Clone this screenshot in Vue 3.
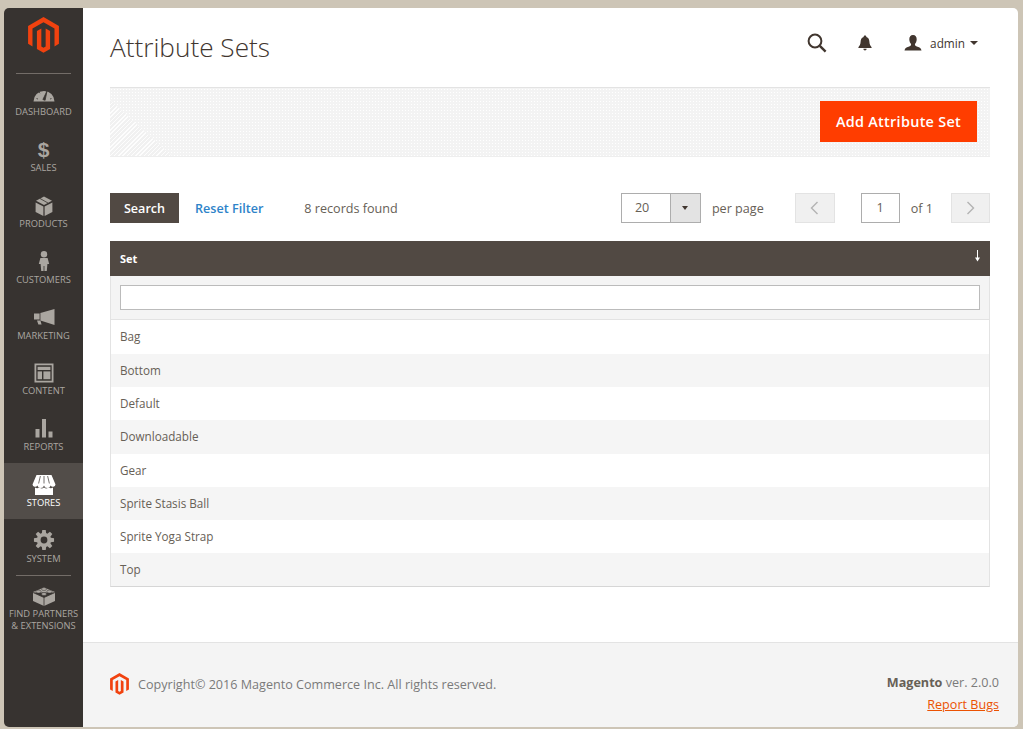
<script setup>
// gear outline for the System menu icon
const gearPath = () => {
  const cx = 12, cy = 10, teeth = 8
  let d = ''
  for (let i = 0; i < teeth; i++) {
    const a = (i / teeth) * Math.PI * 2
    const pts = [[-0.3, 7.2], [-0.17, 10.2], [0.17, 10.2], [0.3, 7.2]]
    pts.forEach(([off, r], j) => {
      const x = cx + r * Math.cos(a + off)
      const y = cy + r * Math.sin(a + off)
      d += (i === 0 && j === 0 ? 'M' : 'L') + x.toFixed(2) + ' ' + y.toFixed(2)
    })
  }
  return d + 'Z M12 6.6A3.4 3.4 0 1 0 12 13.4A3.4 3.4 0 1 0 12 6.6Z'
}

const menu = [
  { label: 'Dashboard', paths: ['M1.5 17.5A10.5 10.5 0 0 1 22.5 17.5Z'], cuts: ['M10.9 15.5L15 7L13.1 16.3Z', 'M4.5 14.5L6 15', 'M7 8L8 9.2', 'M12 5.5V7', 'M19.5 14.5L18 15'] },
  { label: 'Sales', text: '$' },
  { label: 'Products', paths: ['M3.6 6.4L11.4 10.4V20L3.6 16Z', 'M20.4 6.4L12.6 10.4V20L20.4 16Z', 'M12 0.5L20 4.8L12 9L4 4.8Z'], cuts: ['M8 2.5L16 7'] },
  { label: 'Customers', paths: ['M12 0A3.2 3.2 0 1 0 12 6.4A3.2 3.2 0 1 0 12 0Z', 'M8.4 7H15.6L17.2 13H15.4L14.8 20H12.4V15H11.6V20H9.2L8.6 13H6.8Z'] },
  { label: 'Marketing', paths: ['M2 6.5H7.6V12.5H2Z', 'M8.4 6L22.5 2V18L8.4 13.5Z', 'M5 13.4H8.4L9.6 17.5H6.4Z'] },
  { label: 'Content', paths: ['M2.5 0.5H21.5V19.5H2.5ZM4.3 2.3V17.7H19.7V2.3Z', 'M5.6 3.8H18.4V7H5.6Z', 'M5.6 8.4H10V16.2H5.6Z', 'M11.4 8.4H18.4V16.2H11.4Z'] },
  { label: 'Reports', paths: ['M3.5 10H7.5V18.5H3.5Z', 'M10 0H14V18.5H10Z', 'M16.5 12.5H20.5V18.5H16.5Z'] },
  {
    label: 'Stores',
    active: true,
    paths: ['M4.5 0H19.5L23.5 9.5A2.6 2.6 0 0 1 18.6 10.4A3.4 3.4 0 0 1 12 10.4A3.4 3.4 0 0 1 5.4 10.4A2.6 2.6 0 0 1 0.5 9.5Z', 'M3 12.4C4.2 13.4 6 13.4 7.4 12.4C9.4 13.8 11 13.6 12 12.6C13 13.6 14.6 13.8 16.6 12.4C18 13.4 19.8 13.4 21 12.4V20H3Z'],
    cuts: ['M8.4 1L6.6 8.5', 'M12 1V8.5', 'M15.6 1L17.4 8.5']
  },
  { label: 'System', paths: [gearPath()] },
]

const rows = ['Bag', 'Bottom', 'Default', 'Downloadable', 'Gear', 'Sprite Stasis Ball', 'Sprite Yoga Strap', 'Top']
const logo = 'M15 0L30 8.7V26.1L25.7 28.6V11.2L15 5L4.3 11.2V28.6L0 26.1V8.7ZM8.6 13.7L12.9 11.2V28.6L15 29.9L17.1 28.6V11.2L21.4 13.7V31.1L15 34.8L8.6 31.1Z'
</script>

<template>
  <div class="window">
    <nav class="sidebar">
      <div class="logo">
        <svg width="31" height="36" viewBox="0 0 30 35"><path :d="logo" fill="#f1420f" /></svg>
      </div>
      <div class="menu">
        <div v-for="item in menu" :key="item.label" class="menu-item" :class="{ active: item.active }">
          <span v-if="item.text" class="icon-text">{{ item.text }}</span>
          <svg v-else class="menu-icon" width="24" height="20" viewBox="0 0 24 20">
            <path v-for="d in item.paths" :key="d" :d="d" fill-rule="evenodd" class="icon-fill" />
            <path v-for="d in item.cuts" :key="d" :d="d" class="icon-cut" />
          </svg>
          <span class="menu-label">{{ item.label }}</span>
        </div>
      </div>
      <div class="menu-item partners">
        <svg class="menu-icon" width="24" height="20" viewBox="0 0 24 20">
          <path class="icon-fill" d="M1 6L12 1.5L23 6V15L12 20L1 15Z" />
          <path class="icon-cut" d="M1 6.5L12 11.5L23 6.5M12 11.5V20" fill="none" />
          <ellipse class="stud" cx="12" cy="3" rx="2.6" ry="1.5" />
          <ellipse class="stud" cx="6.5" cy="5.6" rx="2.6" ry="1.5" />
          <ellipse class="stud" cx="17.5" cy="5.6" rx="2.6" ry="1.5" />
          <ellipse class="stud" cx="12" cy="8" rx="2.6" ry="1.5" />
        </svg>
        <span class="menu-label">Find Partners<br />&amp; Extensions</span>
      </div>
    </nav>

    <div class="main">
      <div class="content">
        <header class="page-header">
          <h1>Attribute Sets</h1>
          <div class="header-tools">
            <svg class="tool-search" width="20" height="20" viewBox="0 0 20 20">
              <circle cx="8" cy="8" r="6.4" fill="none" stroke="#41362f" stroke-width="2" />
              <path d="M12.8 12.8L18.6 18.6" stroke="#41362f" stroke-width="2.4" />
            </svg>
            <svg class="tool-bell" width="14" height="16" viewBox="0 0 14 16">
              <path fill="#41362f" d="M7 0.5C8 0.5 8.4 1.2 8.4 1.9C10.6 2.6 11.3 4.4 11.4 6.8C11.5 9.4 12.4 10.8 13.6 12.2V13H0.4V12.2C1.6 10.8 2.5 9.4 2.6 6.8C2.7 4.4 3.4 2.6 5.6 1.9C5.6 1.2 6 0.5 7 0.5ZM5.4 13.8H8.6C8.6 14.9 7.9 15.5 7 15.5C6.1 15.5 5.4 14.9 5.4 13.8Z" />
            </svg>
            <div class="user">
              <svg width="18" height="16" viewBox="0 0 17 16">
                <path fill="#41362f" d="M8.5 0C11 0 12.2 1.8 12.2 4.2C12.2 6.4 11.2 8.2 10.4 9C10.4 10.6 11 11 13 11.8C15.2 12.6 16.6 13.2 17 15.5H0C0.4 13.2 1.8 12.6 4 11.8C6 11 6.6 10.6 6.6 9C5.8 8.2 4.8 6.4 4.8 4.2C4.8 1.8 6 0 8.5 0Z" />
              </svg>
              <span class="user-name">admin</span>
              <span class="caret user-caret"></span>
            </div>
          </div>
        </header>

        <div class="action-bar">
          <button class="btn-primary">Add Attribute Set</button>
        </div>

        <div class="grid-controls">
          <div class="controls-left">
            <button class="btn-search">Search</button>
            <a class="reset-link">Reset Filter</a>
            <span class="records">8 records found</span>
          </div>
          <div class="controls-right">
            <div class="per-page">
              <span class="per-value">20</span>
              <span class="per-arrow"><span class="caret dark"></span></span>
            </div>
            <span class="per-label">per page</span>
            <button class="page-btn prev">
              <svg width="9" height="14" viewBox="0 0 9 14"><path d="M7.5 1L1.5 7L7.5 13" fill="none" stroke="#b3b3b3" stroke-width="1.4" /></svg>
            </button>
            <span class="page-input">1</span>
            <span class="page-of">of 1</span>
            <button class="page-btn next">
              <svg width="9" height="14" viewBox="0 0 9 14"><path d="M1.5 1L7.5 7L1.5 13" fill="none" stroke="#b3b3b3" stroke-width="1.4" /></svg>
            </button>
          </div>
        </div>

        <div class="grid">
          <div class="grid-head">
            <span>Set</span>
            <svg class="sort" width="7" height="12" viewBox="0 0 7 12">
              <path d="M3.5 0V8" stroke="#fff" stroke-width="1" />
              <path d="M1 7.5H6L3.5 11.5Z" fill="#fff" />
            </svg>
          </div>
          <div class="grid-filter">
            <input type="text" class="filter-input" />
          </div>
          <div v-for="(row, index) in rows" :key="row" class="grid-row" :class="{ even: index % 2 === 1 }">{{ row }}</div>
        </div>
      </div>

      <footer class="footer">
        <div class="copyright">
          <svg width="19" height="22" viewBox="0 0 30 35"><path :d="logo" fill="#f1420f" /></svg>
          <span>Copyright© 2016 Magento Commerce Inc. All rights reserved.</span>
        </div>
        <div class="version">
          <div><strong>Magento</strong> ver. 2.0.0</div>
          <a class="report">Report Bugs</a>
        </div>
      </footer>
    </div>
  </div>
</template>

<style>
html, body {
  margin: 0;
  background: #cdc5b6;
}
</style>

<style scoped>
.window {
  box-sizing: border-box;
  width: 1023px;
  height: 729px;
  padding: 8px 5px 2px 4px;
  display: flex;
  font-family: "Open Sans", sans-serif;
  color: #676056;
}
.sidebar {
  width: 79px;
  flex: none;
  background: #373330;
  border-radius: 5px 0 0 5px;
}
.logo {
  height: 64.6px;
  display: flex;
  justify-content: center;
  padding-top: 9px;
  box-sizing: border-box;
}
.logo::after {
  content: "";
  position: absolute;
  left: 16px;
  top: 73px;
  width: 55px;
  border-top: 1px solid #736d68;
}
.menu-item {
  height: 55.8px;
  box-sizing: border-box;
  padding-top: 11.5px;
  display: flex;
  flex-direction: column;
  align-items: center;
}
.menu-item.active {
  background: #524d49;
}
.menu-icon {
  flex: none;
  overflow: visible;
}
.icon-text {
  height: 20px;
  font-size: 21px;
  line-height: 20px;
  font-weight: 700;
  color: #aaa6a0;
  font-family: "Liberation Sans", sans-serif;
}
.icon-fill {
  fill: #aaa6a0;
}
.icon-cut {
  fill: #373330;
  stroke: #373330;
  stroke-width: 0.8;
}
.stud {
  fill: #aaa6a0;
  stroke: #373330;
  stroke-width: 0.5;
}
.active .icon-fill {
  fill: #fff;
}
.active .icon-cut {
  fill: #524d49;
  stroke: #524d49;
}
.menu-label {
  margin-top: 2.3px;
  font-size: 9.35px;
  line-height: 12px;
  text-transform: uppercase;
  text-align: center;
  color: #aaa6a0;
  white-space: nowrap;
}
.active .menu-label {
  color: #fff;
}
.partners {
  height: auto;
  margin: 0 12px;
  border-top: 1px solid #736d68;
  padding-top: 10px;
}
.partners .menu-label {
  margin: 2px -12px 0;
}
.main {
  flex: 1;
  min-width: 0;
  background: #fff;
  border-radius: 0 5px 5px 0;
  display: flex;
  flex-direction: column;
  overflow: hidden;
}
.content {
  flex: 1;
  padding: 0 28px 0 27px;
}
.page-header {
  height: 79px;
  display: flex;
  align-items: center;
  justify-content: space-between;
}
h1 {
  margin: 0 0 2px;
  font-size: 26.2px;
  font-weight: 300;
  color: #41362f;
}
.header-tools {
  display: flex;
  align-items: center;
  margin-right: 12px;
  margin-bottom: 9px;
}
.tool-search {
  margin-right: 31px;
}
.tool-bell {
  margin-right: 32px;
}
.user {
  display: flex;
  align-items: center;
  gap: 8px;
}
.user-name {
  font-size: 11.8px;
  color: #41362f;
}
.caret {
  width: 0;
  height: 0;
  border-left: 4px solid transparent;
  border-right: 4px solid transparent;
  border-top: 4px solid #41362f;
}
.user-caret {
  margin-left: -3px;
}
.action-bar {
  position: relative;
  height: 70px;
  box-sizing: border-box;
  border-top: 1px solid #e3e3e3;
  border-bottom: 1px solid #eee;
  padding: 13px 13px 0 0;
  display: flex;
  justify-content: flex-end;
  background-color: #f3f3f3;
  background-image: radial-gradient(#fff 0.7px, transparent 0.9px);
  background-size: 3px 3px;
}
/* faint hatched corner at the lower left of the bar */
.action-bar::before {
  content: "";
  position: absolute;
  left: 0;
  bottom: 0;
  width: 62px;
  height: 56px;
  background: repeating-linear-gradient(135deg, #fdfdfd 0 1px, #f1f1f1 1px 3px);
  clip-path: polygon(0 0, 100% 100%, 0 100%);
}
.btn-primary {
  width: 157px;
  height: 41px;
  border: 0;
  background: #ff3d00;
  color: #fff;
  font-family: inherit;
  font-size: 14.4px;
  font-weight: 600;
  letter-spacing: 0.3px;
}
.grid-controls {
  margin-top: 36px;
  height: 30px;
  display: flex;
  justify-content: space-between;
  font-size: 12.6px;
}
.controls-left, .controls-right {
  display: flex;
  align-items: center;
}
.btn-search {
  width: 69px;
  height: 30px;
  border: 0;
  background: #514943;
  color: #fff;
  font-family: inherit;
  font-size: 12.6px;
  font-weight: 600;
}
.reset-link {
  margin-left: 16px;
  color: #2e83c9;
  font-weight: 600;
}
.records {
  margin-left: 41px;
}
.per-page {
  width: 80px;
  height: 30px;
  box-sizing: border-box;
  border: 1px solid #adadad;
  display: flex;
}
.per-value {
  flex: 1;
  padding-left: 13px;
  line-height: 28px;
}
.per-arrow {
  width: 29px;
  background: #e3e3e3;
  border-left: 1px solid #adadad;
  display: flex;
  align-items: center;
  justify-content: center;
}
.caret.dark {
  border-left-width: 3.5px;
  border-right-width: 3.5px;
}
.per-label {
  margin-left: 11px;
  margin-right: 31px;
}
.page-btn {
  width: 40px;
  height: 30px;
  box-sizing: border-box;
  border: 1px solid #e3e3e3;
  background: #f0f0f0;
  padding: 0;
  display: flex;
  align-items: center;
  justify-content: center;
}
.page-btn.next {
  width: 39px;
}
.page-input {
  margin-left: 26px;
  width: 39px;
  height: 30px;
  box-sizing: border-box;
  border: 1px solid #adadad;
  line-height: 28px;
  text-align: center;
}
.page-of {
  margin-left: 11px;
  margin-right: 18px;
}
.grid {
  margin-top: 18px;
  font-size: 11.7px;
}
.grid-head {
  height: 35px;
  box-sizing: border-box;
  background: #514943;
  color: #fff;
  font-weight: 700;
  font-size: 11px;
  padding: 0 10px;
  display: flex;
  justify-content: space-between;
  align-items: center;
}
.sort {
  margin: -5px -1px 0 0;
}
.grid-filter {
  height: 44.4px;
  box-sizing: border-box;
  padding: 9px 9px 0;
  background: #f4f4f4;
  border: 1px solid #e3e3e3;
  border-width: 0 1px 1px;
}
.filter-input {
  display: block;
  box-sizing: border-box;
  width: 100%;
  height: 25px;
  border: 1px solid #bbb;
  background: #fff;
  margin: 0;
}
.grid-row {
  height: 33.3px;
  line-height: 33px;
  box-sizing: border-box;
  padding: 0 9px;
  border-left: 1px solid #e3e3e3;
  border-right: 1px solid #e3e3e3;
}
.grid-row.even {
  background: #f5f5f5;
}
.grid-row:last-child {
  border-bottom: 1px solid #d6d6d6;
}
.footer {
  flex: none;
  height: 85px;
  box-sizing: border-box;
  background: #f4f4f4;
  border-top: 1px solid #e3e3e3;
  padding: 29px 19px 0 27px;
  display: flex;
  justify-content: space-between;
  font-size: 12.6px;
  color: #7a7a7a;
}
.copyright {
  display: flex;
  align-items: center;
  gap: 9px;
  height: 24px;
}
.version {
  text-align: right;
  line-height: 22px;
}
.version strong {
  color: #676056;
}
.report {
  display: block;
  color: #eb5202;
  text-decoration: underline;
}
</style>
